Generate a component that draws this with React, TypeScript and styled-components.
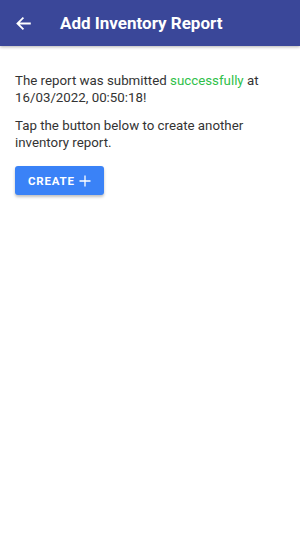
import React from 'react';
import styled, { createGlobalStyle } from 'styled-components';

const GlobalStyle = createGlobalStyle`
  html, body {
    margin: 0;
    padding: 0;
    background: #ffffff;
    font-family: Roboto, "Liberation Sans", sans-serif;
  }
`;

const Page = styled.div`
  width: 300px;
  min-height: 533px;
  background: #ffffff;
`;

const Header = styled.header`
  height: 46px;
  background: #3a4799;
  display: flex;
  align-items: center;
  padding: 0 15px;
  box-shadow: 0 1px 3px rgba(0, 0, 0, 0.3);
`;

const BackButton = styled.button`
  background: none;
  border: none;
  padding: 0;
  width: 17px;
  height: 17px;
  display: flex;
  align-items: center;
  justify-content: center;
  color: #ffffff;
  margin-right: 28px;
`;

const Title = styled.h1`
  margin: 0;
  color: #ffffff;
  font-size: 17px;
  font-weight: 700;
`;

const Content = styled.main`
  padding: 27px 15px 0;
  color: #333333;
  font-size: 13.3px;
  line-height: 16.5px;
`;

const Paragraph = styled.p`
  margin: 0 0 12px;
`;

const Success = styled.span`
  color: #2fbf4a;
`;

const CreateButton = styled.button`
  margin-top: 15px;
  height: 29px;
  padding: 0 13px;
  border: none;
  border-radius: 3px;
  background: #3a82f7;
  color: #ffffff;
  font-family: Roboto, "Liberation Sans", sans-serif;
  font-size: 11.5px;
  font-weight: 700;
  letter-spacing: 0.8px;
  display: flex;
  align-items: center;
  gap: 4px;
  box-shadow: 0 2px 3px rgba(0, 0, 0, 0.25);
`;

const App = () => (
  <Page>
    <GlobalStyle />
    <Header>
      <BackButton aria-label="back">
        <svg width="17" height="17" viewBox="0 0 24 24" fill="none" stroke="currentColor" strokeWidth="2.6" strokeLinecap="square">
          <path d="M21 12H4M11 4.5L3.5 12L11 19.5" />
        </svg>
      </BackButton>
      <Title>Add Inventory Report</Title>
    </Header>
    <Content>
      <Paragraph>
        The report was submitted <Success>successfully</Success> at 16/03/2022, 00:50:18!
      </Paragraph>
      <Paragraph>Tap the button below to create another inventory report.</Paragraph>
      <CreateButton>
        CREATE
        <svg width="12" height="12" viewBox="0 0 12 12" stroke="currentColor" strokeWidth="1.3">
          <path d="M6 0.5V11.5M0.5 6H11.5" />
        </svg>
      </CreateButton>
    </Content>
  </Page>
);

export default App;
